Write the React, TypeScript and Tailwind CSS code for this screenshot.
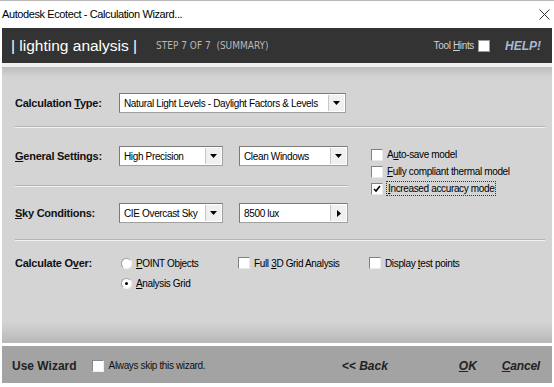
const narrow = "font-['Liberation_Sans',sans-serif] text-[10px] tracking-[-0.35px]";

function U({ children }: { children: string }) {
  return <span className="underline underline-offset-1">{children}</span>;
}

function Select({ text, w, arrow = 'down' }: { text: string; w: string; arrow?: 'down' | 'right' }) {
  return (
    <div className={`${w} h-[20px] flex bg-white border border-t-[#7a7a7a] border-l-[#7a7a7a] border-b-[#a0a0a0] border-r-[#a0a0a0]`}>
      <div className={`flex-1 flex items-center pl-[4px] whitespace-nowrap text-black ${narrow} text-[10.5px]`}>{text}</div>
      <div className="w-[16px] m-[1px] flex items-center justify-center bg-[#f0f0f0] border-l border-[#c8c8c8]">
        {arrow === 'down' ? (
          <svg width="7" height="4" viewBox="0 0 7 4"><path d="M0 0h7L3.5 4z" fill="#000" /></svg>
        ) : (
          <svg width="4" height="7" viewBox="0 0 4 7"><path d="M0 0v7L4 3.5z" fill="#000" /></svg>
        )}
      </div>
    </div>
  );
}

function Check({ checked = false, children, focus = false }: { checked?: boolean; children: React.ReactNode; focus?: boolean }) {
  return (
    <div className="flex items-center gap-[4px]">
      <div className="w-[12px] h-[12px] shrink-0 bg-white border border-t-[#808080] border-l-[#808080] border-b-[#e8e8e8] border-r-[#e8e8e8] flex items-center justify-center">
        {checked && (
          <svg width="8" height="8" viewBox="0 0 8 8"><path d="M1 4l2 2 4-5" stroke="#000" strokeWidth="1.6" fill="none" /></svg>
        )}
      </div>
      <span className={`text-black leading-[13px] whitespace-nowrap ${narrow} text-[10.5px] ${focus ? 'outline outline-1 outline-dotted outline-[#333] px-[1px]' : ''}`}>{children}</span>
    </div>
  );
}

function Radio({ checked = false, children }: { checked?: boolean; children: React.ReactNode }) {
  return (
    <div className="flex items-center gap-[4px] h-[16px]">
      <div className="w-[11px] h-[11px] rounded-full bg-white border border-t-[#a0a0a0] border-l-[#a0a0a0] border-b-[#f4f4f4] border-r-[#f4f4f4] flex items-center justify-center">
        {checked && <div className="w-[3px] h-[3px] rounded-full bg-black" />}
      </div>
      <span className={`text-black whitespace-nowrap ${narrow} text-[10.5px]`}>{children}</span>
    </div>
  );
}

function Sep() {
  return <div className="w-full h-[2px] border-t border-[#b4b4b4] border-b border-b-[#f2f2f2]" />;
}

const label = "w-[104px] shrink-0 text-[11px] tracking-[-0.25px] font-bold text-[#111] font-['Liberation_Sans',sans-serif]";

export default function App() {
  return (
    <div className="w-[554px] h-[387px] bg-white overflow-hidden flex flex-col border-t border-[#b8b8b8] font-['Liberation_Sans',sans-serif]">
      <div className="h-[27px] shrink-0 flex items-center justify-between pl-[2px] pr-[4px]">
        <span className="text-[11px] tracking-[-0.4px] text-black">Autodesk Ecotect - Calculation Wizard...</span>
        <svg width="11" height="11" viewBox="0 0 11 11"><path d="M0.5 0.5l10 10M10.5 0.5l-10 10" stroke="#333" strokeWidth="1" /></svg>
      </div>

      <div className="mx-[2px] h-[35px] shrink-0 bg-[#333333] flex items-center pl-[9px] pr-[11px]">
        <span className="text-[15.5px] text-white">| lighting analysis |</span>
        <span className="ml-[19px] text-[10px] text-[#b8b8b8] font-['DejaVu_Sans_Condensed',sans-serif]">STEP 7 OF 7 &nbsp;(SUMMARY)</span>
        <div className="ml-auto flex items-center">
          <span className={`text-[#d0d0d0] ${narrow}`}>Tool <U>H</U>ints</span>
          <div className="ml-[4px] w-[12px] h-[12px] bg-white border border-[#999]" />
          <span className="ml-[15px] text-[12px] font-bold italic text-[#a9b9d4]">HELP!</span>
        </div>
      </div>

      <div className="h-[4px] shrink-0 mx-[2px] bg-[#f0f0f0]" />

      <div className="mx-[2px] h-[276px] shrink-0 bg-[linear-gradient(to_bottom,#bdbdbd_0px,#d4d4d4_10px,#d4d4d4_255px,#b8b8b8_276px)] pl-[13px] pr-[7px]">
        <div className="mt-[26px] flex items-center h-[20px]">
          <span className={label}>Calculation <U>T</U>ype:</span>
          <Select text="Natural Light Levels - Daylight Factors & Levels" w="w-[227px]" />
        </div>
        <div className="mt-[13px]"><Sep /></div>

        <div className="flex">
          <div className="w-[333px]">
            <div className="mt-[18px] flex items-center h-[20px]">
              <span className={label}><U>G</U>eneral Settings:</span>
              <Select text="High Precision" w="w-[104px]" />
              <div className="ml-[16px]"><Select text="Clean Windows" w="w-[109px]" /></div>
            </div>
            <div className="mt-[19px]"><Sep /></div>
            <div className="mt-[16px] flex items-center h-[20px]">
              <span className={label}><U>S</U>ky Conditions:</span>
              <Select text="CIE Overcast Sky" w="w-[104px]" />
              <div className="ml-[16px]"><Select text="8500 lux" w="w-[109px]" arrow="right" /></div>
            </div>
          </div>
          <div className="ml-[23px] mt-[20px] flex flex-col gap-[4px]">
            <Check>A<U>u</U>to-save model</Check>
            <Check><U>F</U>ully compliant thermal model</Check>
            <Check checked focus><U>I</U>ncreased accuracy mode</Check>
          </div>
        </div>

        <div className="mt-[16px]"><Sep /></div>

        <div className="mt-[14px] flex">
          <span className={`${label} leading-[16px]`}>Calculate O<U>v</U>er:</span>
          <div className="ml-[2px] w-[117px] flex flex-col gap-[4px]">
            <Radio><U>P</U>OINT Objects</Radio>
            <Radio checked><U>A</U>nalysis Grid</Radio>
          </div>
          <div className="w-[131px] h-[16px] flex items-center"><Check>Full <U>3</U>D Grid Analysis</Check></div>
          <div className="h-[16px] flex items-center"><Check>Display <U>t</U>est points</Check></div>
        </div>
      </div>

      <div className="h-[3px] shrink-0 mx-[2px] bg-white" />

      <div className="mx-[2px] h-[37px] shrink-0 bg-[#a3a3a3] flex items-center pt-[2px] pl-[10px] pr-[12px]">
        <span className="text-[12px] font-bold text-[#222]">Use Wizard</span>
        <div className="ml-[15px] w-[12px] h-[12px] bg-white border border-t-[#888] border-l-[#888] border-b-[#eee] border-r-[#eee]" />
        <span className={`ml-[5px] text-[#111] ${narrow}`}>Always skip this wizard.</span>
        <span className="ml-auto text-[12px] font-bold italic text-[#222]">&lt;&lt; Back</span>
        <span className="ml-[71px] text-[12px] font-bold italic text-[#222]"><U>O</U>K</span>
        <span className="ml-[25px] text-[12px] font-bold italic text-[#222] tracking-[-0.2px]"><U>C</U>ancel</span>
      </div>
    </div>
  );
}
